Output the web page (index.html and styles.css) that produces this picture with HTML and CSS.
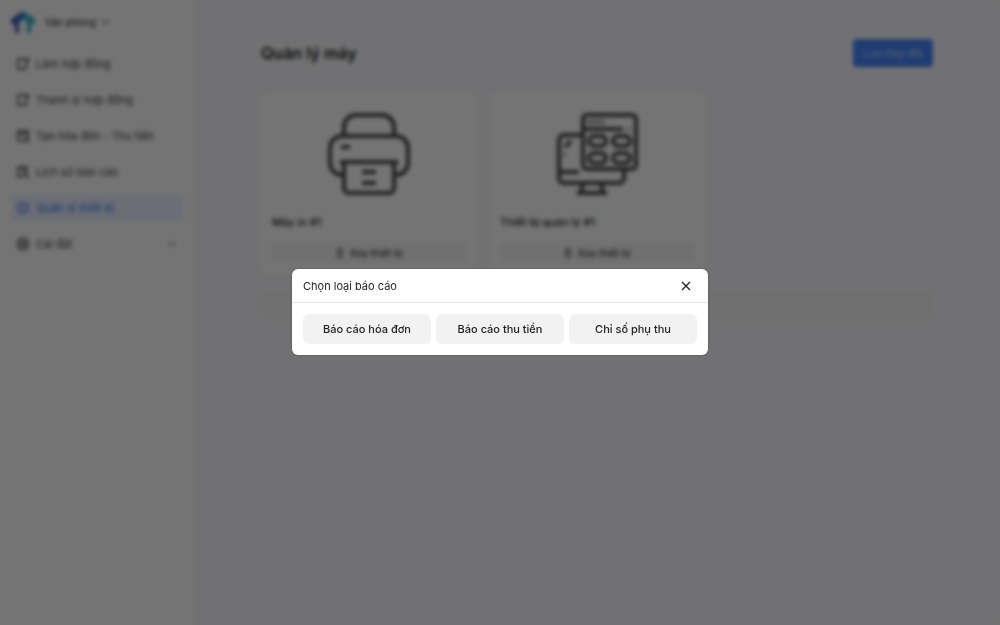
FILE: index.html
```html
<!DOCTYPE html>
<html lang="vi">
<head>
  <meta charset="UTF-8" />
  <meta name="viewport" content="width=device-width, initial-scale=1.0"/>
  <title>Quản lý máy</title>
  <link rel="stylesheet" href="styles.css">
</head>
<body>

<div class="app">
  <aside class="sidebar">
    <div class="brand">
      <svg class="logo" viewBox="0 0 24 22">
        <path d="M12 0 0 8v5h4v9h4V11l4-3z" fill="#3a62b8"/>
        <path d="M12 0l12 8v5h-4v9h-4V11l-4-3z" fill="#2fb4d0"/>
      </svg>
      <button class="branch">Văn phòng
        <svg class="chevron" viewBox="0 0 10 6"><path d="M1 1l4 4 4-4"/></svg>
      </button>
    </div>

    <nav class="menu">
      <a href="#" class="menu-item">
        <svg class="icon" viewBox="0 0 14 14"><path d="M8 2H2v10h8V7M8 2h4v4M12 2 9 6"/></svg>
        Làm hợp đồng
      </a>
      <a href="#" class="menu-item">
        <svg class="icon" viewBox="0 0 14 14"><path d="M8 2H2v10h8V7M8 2h4v4M12 2 9 6"/></svg>
        Thanh lý hợp đồng
      </a>
      <a href="#" class="menu-item">
        <svg class="icon" viewBox="0 0 14 14"><path d="M12 7V2H2v10h5M2 4h10M5 7h3M8 12l4-4v4z"/></svg>
        Tạo hóa đơn - Thu tiền
      </a>
      <a href="#" class="menu-item">
        <svg class="icon" viewBox="0 0 14 14"><path d="M11 6V2H2v10h4M4 4h5"/><circle cx="9" cy="9" r="2"/><path d="M11 11l2 2"/></svg>
        Lịch sử báo cáo
      </a>
      <a href="#" class="menu-item active">
        <svg class="icon" viewBox="0 0 14 14"><circle cx="7" cy="7" r="5"/><path d="M7 6v4M7 4v1"/></svg>
        Quản lý thiết bị
      </a>
      <a href="#" class="menu-item">
        <svg class="icon" viewBox="0 0 14 14"><path d="M7 1l5 3v6l-5 3-5-3V4z"/><circle cx="7" cy="7" r="2"/></svg>
        Cài đặt
        <svg class="chevron end" viewBox="0 0 10 6"><path d="M1 1l4 4 4-4"/></svg>
      </a>
    </nav>
  </aside>

  <main class="content">
    <header class="page-header">
      <h1>Quản lý máy</h1>
      <button class="btn-primary">Lưu thay đổi</button>
    </header>

    <div class="devices">
      <section class="card">
        <svg class="device-icon" viewBox="0 0 84 84">
          <path d="M17 24V16a12 12 0 0 1 12-12h26a12 12 0 0 1 12 12v8"/>
          <path d="M16 64h-1A12 12 0 0 1 3 52V37a12 12 0 0 1 12-12h54a12 12 0 0 1 12 12v15a12 12 0 0 1-12 12h-2"/>
          <path d="M13 51h58M17 51v26a5 5 0 0 0 5 5h40a5 5 0 0 0 5-5V51M14 36h9M35 61h14M35 72h14"/>
        </svg>
        <h2>Máy in #1</h2>
        <button class="btn-delete">
          <svg class="trash" viewBox="0 0 10 10"><path d="M2 2h6M4 1h2M3 2v7h4V2"/></svg>
          Xóa thiết bị
        </button>
      </section>

      <section class="card">
        <svg class="device-icon" viewBox="0 0 84 84">
          <rect x="28" y="4" width="53" height="54" rx="4"/>
          <path d="M28 18h40"/>
          <path d="M72 18h3M32 11h18" stroke-width="2"/>
          <rect x="34" y="25" width="17" height="10" rx="5"/>
          <rect x="58" y="25" width="17" height="10" rx="5"/>
          <rect x="34" y="42" width="17" height="10" rx="5"/>
          <rect x="58" y="42" width="17" height="10" rx="5"/>
          <path d="M28 24H9a5 5 0 0 0-5 5v38a5 5 0 0 0 5 5h55a5 5 0 0 0 5-5v-9M4 61h20M10 36l6-6M28 72l-2 9M46 72l2 9M22 82h30"/>
          <path d="M10 42v3" stroke-width="2"/>
        </svg>
        <h2>Thiết bị quản lý #1</h2>
        <button class="btn-delete">
          <svg class="trash" viewBox="0 0 10 10"><path d="M2 2h6M4 1h2M3 2v7h4V2"/></svg>
          Xóa thiết bị
        </button>
      </section>
    </div>

    <div class="notice"></div>
  </main>
</div>

<div class="overlay">
  <div class="modal" role="dialog" aria-modal="true" aria-labelledby="modalTitle">
    <div class="modal-header">
      <h3 id="modalTitle">Chọn loại báo cáo</h3>
      <button class="close" aria-label="Đóng">
        <svg viewBox="0 0 10 10"><path d="M1 1l8 8M9 1 1 9"/></svg>
      </button>
    </div>
    <div class="modal-body">
      <button class="option">Báo cáo hóa đơn</button>
      <button class="option">Báo cáo thu tiền</button>
      <button class="option">Chỉ số phụ thu</button>
    </div>
  </div>
</div>

</body>
</html>
```
FILE: styles.css
```css
* {
  box-sizing: border-box;
}

body {
  font-family: Inter, sans-serif;
  font-size: 11px;
  margin: 0;
  color: #222;
  background: #f7f7fa;
}

h1, h2, h3 {
  margin: 0;
}

button {
  font: inherit;
  color: inherit;
  border: none;
  cursor: pointer;
}

svg {
  fill: none;
  stroke: currentColor;
}

.app {
  display: flex;
  min-height: 100vh;
}

.sidebar {
  width: 193px;
  flex-shrink: 0;
  padding: 10px 10px 10px 11px;
  background: #fdfdfd;
}

.brand {
  display: flex;
  align-items: center;
  gap: 10px;
  height: 24px;
}

.logo {
  width: 24px;
  height: 22px;
  stroke: none;
}

.branch {
  display: flex;
  align-items: center;
  gap: 4px;
  padding: 0;
  font-size: 10px;
  background: none;
}

.chevron {
  width: 10px;
  height: 6px;
}

.end {
  margin-left: auto;
}

.menu {
  display: flex;
  flex-direction: column;
  gap: 9px;
  margin-top: 16px;
}

.menu-item {
  display: flex;
  align-items: center;
  gap: 6px;
  height: 27px;
  padding: 0 6px 0 5px;
  border-radius: 4px;
  color: #444;
  text-decoration: none;
}

.menu-item.active {
  color: #3577f0;
  background: #e9f0fd;
}

.icon {
  width: 14px;
  height: 14px;
  stroke-width: 1.5;
}

.content {
  flex: 1;
  padding: 39px 67px 40px 68px;
}

.page-header {
  display: flex;
  align-items: center;
  justify-content: space-between;
  margin-bottom: 26px;
}

.page-header h1 {
  font-size: 16px;
  line-height: 18px;
  font-weight: 600;
}

.btn-primary {
  height: 28px;
  padding: 0 11px;
  border-radius: 4px;
  font-size: 10px;
  color: #c4d8ff;
  background: #4484fa;
}

.devices {
  display: grid;
  grid-template-columns: repeat(3, 1fr);
  gap: 12px;
}

.card {
  display: flex;
  flex-direction: column;
  padding: 18px 11px 11px;
  border-radius: 6px;
  background: #fdfdfd;
}

.device-icon {
  width: 84px;
  height: 84px;
  margin: 0 auto 19px;
  color: #444;
  stroke-width: 4;
}

.card h2 {
  margin-bottom: 12px;
  font-size: 11px;
  line-height: 16px;
  font-weight: 500;
}

.btn-delete {
  display: flex;
  align-items: center;
  justify-content: center;
  gap: 4px;
  height: 21px;
  border-radius: 4px;
  font-size: 10px;
  background: #f4f4f4;
}

.trash {
  width: 10px;
  height: 10px;
}

.notice {
  height: 28px;
  margin-top: 17px;
  border-radius: 4px;
  background: #f2f2f1;
}

.overlay {
  position: fixed;
  inset: 0;
  display: flex;
  align-items: center;
  justify-content: center;
  padding-bottom: 1px;
  background: rgba(0, 0, 0, 0.54);
  backdrop-filter: blur(2px);
}

.modal {
  width: 416px;
  border-radius: 6px;
  background: #fff;
  box-shadow: 0 0 2px rgba(0, 0, 0, 0.4);
}

.modal-header {
  display: flex;
  align-items: center;
  justify-content: space-between;
  height: 34px;
  padding: 0 14px 0 11px;
  border-bottom: 1px solid #e8e8e8;
}

.modal-header h3 {
  font-size: 11px;
  font-weight: 400;
}

.close {
  display: flex;
  padding: 3px;
  background: none;
}

.close svg {
  width: 10px;
  height: 10px;
  stroke-width: 1.3;
}

.modal-body {
  display: grid;
  grid-template-columns: repeat(3, 1fr);
  gap: 5px;
  padding: 11px;
}

.option {
  height: 30px;
  border-radius: 6px;
  font-weight: 500;
  background: #f2f2f2;
}

.option:hover {
  background: #e8e8e8;
}
```
